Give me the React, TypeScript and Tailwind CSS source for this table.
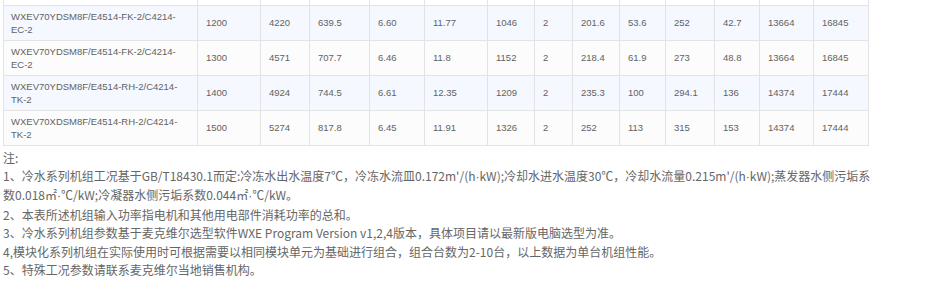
const widths = [194, 63, 49, 60, 55, 63, 47, 38, 47, 46, 49, 45, 54, 55];

const rows = [
  ["WXEV70YDSM8F/E4514-FK-2/C4214-EC-2", "1200", "4220", "639.5", "6.60", "11.77", "1046", "2", "201.6", "53.6", "252", "42.7", "13664", "16845"],
  ["WXEV70YDSM8F/E4514-FK-2/C4214-EC-2", "1300", "4571", "707.7", "6.46", "11.8", "1152", "2", "218.4", "61.9", "273", "48.8", "13664", "16845"],
  ["WXEV70YDSM8F/E4514-RH-2/C4214-TK-2", "1400", "4924", "744.5", "6.61", "12.35", "1209", "2", "235.3", "100", "294.1", "136", "14374", "17444"],
  ["WXEV70XDSM8F/E4514-RH-2/C4214-TK-2", "1500", "5274", "817.8", "6.45", "11.91", "1326", "2", "252", "113", "315", "153", "14374", "17444"],
];

// narrow middle dot, like the reference
function Dot() {
  return <span className="font-['Liberation_Sans',Arial,sans-serif]">·</span>;
}

export default function App() {
  return (
    <div className="h-[283px] w-[930px] overflow-hidden bg-white">
      <div className="pl-[3px]">
        <table className="table-fixed border-collapse font-['Liberation_Sans',Arial,sans-serif] text-[9.5px] leading-[13px] text-[#626262]">
          <colgroup>
            {widths.map((w, i) => (
              <col key={i} style={{ width: w }} />
            ))}
          </colgroup>
          <tbody>
            <tr className="h-[5px] bg-white">
              {widths.map((_, i) => (
                <td key={i} className="border border-t-0 border-[#e3e3e3] p-0" />
              ))}
            </tr>
            {rows.map((r, ri) => (
              <tr key={ri} className={ri % 2 === 0 ? "h-[35px] bg-[#f5f9ff]" : "h-[35px] bg-[#fcfcfc]"}>
                {r.map((c, ci) => (
                  <td
                    key={ci}
                    className={
                      ci === 0
                        ? "border border-[#e3e3e3] py-[4px] pl-[7px] pr-[6px] align-middle break-words"
                        : "border border-[#e3e3e3] px-[8px] py-[4px] align-middle"
                    }
                  >
                    {c}
                  </td>
                ))}
              </tr>
            ))}
          </tbody>
        </table>
      </div>
      <div className="mt-[3px] w-[925px] pl-[3px] font-['Noto_Sans_CJK_SC','Noto_Sans',sans-serif] text-[12px] leading-[18.4px] text-[#666]">
        <p>注:</p>
        <p>
          1、冷水系列机组工况基于GB/T18430.1而定:冷冻水出水温度7℃，冷冻水流皿0.172m'/(h<Dot />kW);冷却水进水温度30℃，冷却水流量0.215m'/(h<Dot />kW);蒸发器水侧污垢系
          <br />
          数0.018㎡<Dot />℃/kW;冷凝器水侧污垢系数0.044㎡<Dot />℃/kW。
        </p>
        <p>2、本表所述机组输入功率指电机和其他用电部件消耗功率的总和。</p>
        <p>3、冷水系列机组参数基于麦克维尔选型软件WXE Program Version v1,2,4版本，具体项目请以最新版电脑选型为准。</p>
        <p>4,模块化系列机组在实际使用时可根据需要以相同模块单元为基础进行组合，组合台数为2-10台，以上数据为单台机组性能。</p>
        <p>5、特殊工况参数请联系麦克维尔当地销售机构。</p>
      </div>
    </div>
  );
}
